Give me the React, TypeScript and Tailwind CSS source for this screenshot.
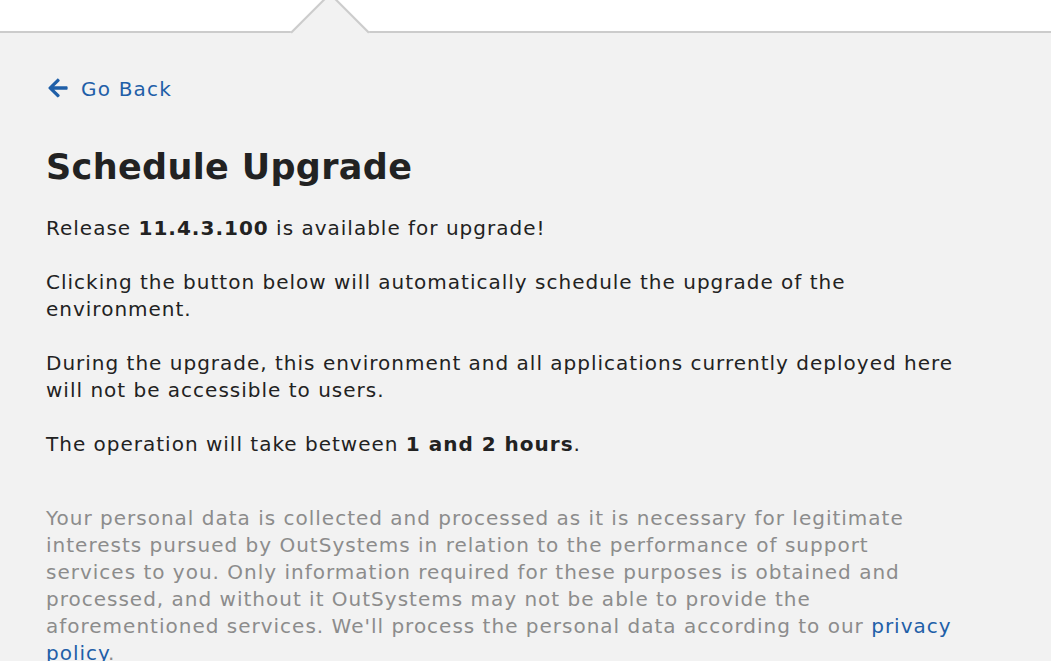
import { FaArrowLeft } from "react-icons/fa";

export default function App() {
  return (
    <div className="min-h-[661px] bg-[#f2f2f2] font-['DejaVu_Sans',sans-serif] text-[#222222] overflow-hidden">
      <div className="relative h-[33px] bg-white border-b-2 border-[#cccccc]">
        <div className="absolute left-[302px] top-[4px] h-[56px] w-[56px] rotate-45 bg-[#f2f2f2] border-l-2 border-t-2 border-[#cccccc]" />
      </div>

      <div className="px-[46px] pt-[43px] max-w-[1004px]">
        <a href="#" className="flex items-center gap-[12px] text-[#1f5fa8] text-[20px] leading-[27px] tracking-[0.06em]">
          <FaArrowLeft className="text-[22px] ml-[1px] -mt-[3px]" />
          <span>Go Back</span>
        </a>

        <h1 className="mt-[42px] text-[35px] font-bold leading-[44px] tracking-[0.01em]">Schedule Upgrade</h1>

        <div className="mt-[26px] text-[20px] leading-[27px] tracking-[0.05em] space-y-[27px]">
          <p>
            Release <b>11.4.3.100</b> is available for upgrade!
          </p>
          <p>Clicking the button below will automatically schedule the upgrade of the environment.</p>
          <p>
            During the upgrade, this environment and all applications currently deployed here will not be
            accessible to users.
          </p>
          <p>
            The operation will take between <b>1 and 2 hours</b>.
          </p>
        </div>

        <p className="mt-[47px] text-[20px] leading-[27px] tracking-[0.05em] text-[#8c8c8c]">
          Your personal data is collected and processed as it is necessary for legitimate interests pursued by
          OutSystems in relation to the performance of support services to you. Only information required for
          these purposes is obtained and processed, and without it OutSystems may not be able to provide the
          aforementioned services. We'll process the personal data according to our{" "}
          <a href="#" className="text-[#1f5fa8]">
            privacy policy
          </a>
          .
        </p>
      </div>
    </div>
  );
}
